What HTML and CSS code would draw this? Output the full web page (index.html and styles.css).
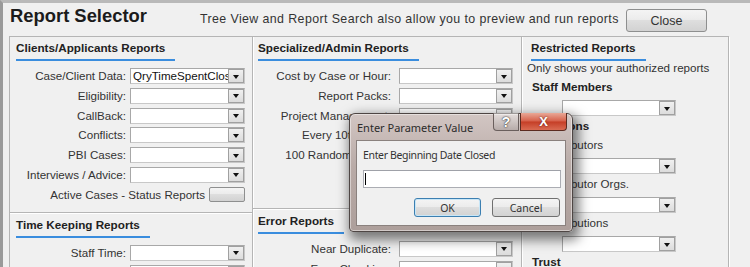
FILE: index.html
```html
<!DOCTYPE html>
<html lang="en">
  <head>
    <meta charset="UTF-8" />
    <meta name="viewport" content="width=device-width, initial-scale=1.0" />
    <title>Report Selector</title>
    <link rel="stylesheet" href="styles.css">
  </head>
  <body>
    <div class="window">
      <div class="topbar">
        <h1>Report Selector</h1>
        <p class="hint">Tree View and Report Search also allow you to preview and run reports</p>
        <button class="btn close-btn">Close</button>
      </div>

      <div class="panels">
        <div class="col col-clients">
          <section class="group group-main">
            <h2 class="group-title">Clients/Applicants Reports</h2>
            <div class="rows">
              <label>Case/Client Data:</label>
              <div class="combo"><span class="combo-text">QryTimeSpentClosed</span><span class="combo-btn"></span></div>
              <label>Eligibility:</label>
              <div class="combo"><span class="combo-text"></span><span class="combo-btn"></span></div>
              <label>CallBack:</label>
              <div class="combo"><span class="combo-text"></span><span class="combo-btn"></span></div>
              <label>Conflicts:</label>
              <div class="combo"><span class="combo-text"></span><span class="combo-btn"></span></div>
              <label>PBI Cases:</label>
              <div class="combo"><span class="combo-text"></span><span class="combo-btn"></span></div>
              <label>Interviews / Advice:</label>
              <div class="combo"><span class="combo-text"></span><span class="combo-btn"></span></div>
              <div class="row-wide">
                <span>Active Cases - Status Reports</span>
                <button class="btn small-btn"></button>
              </div>
            </div>
          </section>
          <section class="group">
            <h2 class="group-title">Time Keeping Reports</h2>
            <div class="rows">
              <label>Staff Time:</label>
              <div class="combo"><span class="combo-text"></span><span class="combo-btn"></span></div>
              <label>Staff Hours:</label>
              <div class="combo"><span class="combo-text"></span><span class="combo-btn"></span></div>
            </div>
          </section>
        </div>

        <div class="col col-admin">
          <section class="group group-main">
            <h2 class="group-title">Specialized/Admin Reports</h2>
            <div class="rows">
              <label>Cost by Case or Hour:</label>
              <div class="combo"><span class="combo-text"></span><span class="combo-btn"></span></div>
              <label>Report Packs:</label>
              <div class="combo"><span class="combo-text"></span><span class="combo-btn"></span></div>
              <label>Project Management:</label>
              <div class="combo"><span class="combo-text"></span><span class="combo-btn"></span></div>
              <label>Every 10th Case:</label>
              <div class="combo"><span class="combo-text"></span><span class="combo-btn"></span></div>
              <label>100 Random Cases:</label>
              <div class="combo"><span class="combo-text"></span><span class="combo-btn"></span></div>
            </div>
          </section>
          <section class="group">
            <h2 class="group-title">Error Reports</h2>
            <div class="rows">
              <label>Near Duplicate:</label>
              <div class="combo"><span class="combo-text"></span><span class="combo-btn"></span></div>
              <label>Error Checking:</label>
              <div class="combo"><span class="combo-text"></span><span class="combo-btn"></span></div>
            </div>
          </section>
        </div>

        <div class="col col-restricted">
          <h2 class="group-title restricted-title">Restricted Reports</h2>
          <p class="note">Only shows your authorized reports</p>
          <h3 class="r-head first">Staff Members</h3>
          <div class="combo r-combo"><span class="combo-text"></span><span class="combo-btn"></span></div>
          <h3 class="r-head">Donations</h3>
          <p class="r-label first">Contributors</p>
          <div class="combo r-combo"><span class="combo-text"></span><span class="combo-btn"></span></div>
          <p class="r-label">Contributor Orgs.</p>
          <div class="combo r-combo"><span class="combo-text"></span><span class="combo-btn"></span></div>
          <p class="r-label">Contributions</p>
          <div class="combo r-combo"><span class="combo-text"></span><span class="combo-btn"></span></div>
          <h3 class="r-head">Trust</h3>
        </div>
      </div>
    </div>

    <div class="dialog">
      <div class="dialog-caption">
        <span class="dialog-title">Enter Parameter Value</span>
        <span class="cap-btn cap-help">?</span>
        <span class="cap-btn cap-close">X</span>
      </div>
      <div class="dialog-body">
        <div class="prompt">Enter Beginning Date Closed</div>
        <div class="param-input"><span class="caret"></span></div>
        <div class="dialog-actions">
          <button class="btn dlg-btn ok">OK</button>
          <button class="btn dlg-btn">Cancel</button>
        </div>
      </div>
    </div>
  </body>
</html>
```

FILE: styles.css
```css
* {
  box-sizing: border-box;
}
html,
body {
  margin: 0;
  height: 100%;
  overflow: hidden;
}
body {
  background-color: #f0f0f0;
  font-family: "Liberation Sans", Arial, sans-serif;
  font-size: 11.6px;
  color: #333;
}
.window {
  height: 100%;
  border-top: 3px solid #b9b9b9;
  border-left: 3px solid #9a9a9a;
  display: flex;
  flex-direction: column;
}
.topbar {
  flex-shrink: 0;
  display: grid;
  grid-template-columns: 197px 1fr 81px;
  align-items: start;
  height: 33px;
  padding-right: 43px;
}
h1 {
  margin: 2px 0 0 7px;
  font-size: 18.4px;
  line-height: 22px;
  color: #1b1b1b;
}
.hint {
  margin: 9px 0 0;
  font-size: 12.4px;
  letter-spacing: 0.4px;
  line-height: 14px;
  white-space: nowrap;
}
.btn {
  font-family: "Liberation Sans", Arial, sans-serif;
  color: #333;
  padding: 0;
  border: 1px solid #8e8f8f;
  border-radius: 3px;
  background: linear-gradient(#f4f4f4 0%, #ececec 45%, #dedede 50%, #d2d2d2 100%);
}
.close-btn {
  margin-top: 6px;
  height: 23px;
  font-size: 12.5px;
}

.panels {
  align-self: flex-start;
  margin-left: 6px;
  display: grid;
  grid-template-columns: 243px 269px 207px;
  flex: 1;
  border-top: 1px solid #b5b5b5;
  border-left: 1px solid #b5b5b5;
}
.col {
  display: flex;
  flex-direction: column;
  border-right: 1px solid #b5b5b5;
  box-shadow: 1px 0 0 #fff;
}
.group {
  display: flex;
  flex-direction: column;
  align-items: flex-start;
  padding: 5px 0 0 6px;
}
.group-main {
  padding-top: 4px;
  padding-bottom: 9px;
  border-bottom: 1px solid #b5b5b5;
  box-shadow: 0 1px 0 #fff;
}
.col-admin .group {
  padding-left: 5px;
}
.col-admin .group-main {
  padding-bottom: 44.8px;
}
.group-title {
  margin: 0;
  padding: 0 10px 4px 0;
  border-bottom: 2px solid #3a8dde;
  font-size: 11.7px;
  line-height: 14px;
  color: #222;
}
.rows {
  display: grid;
  grid-template-columns: 110px 115px;
  grid-auto-rows: 16px;
  column-gap: 4px;
  row-gap: 3.8px;
  align-items: center;
  margin-top: 7px;
}
.col-admin .rows {
  grid-template-columns: 133px 114px;
  column-gap: 8px;
}
.rows label {
  text-align: right;
  white-space: nowrap;
  line-height: 16px;
}
.row-wide {
  grid-column: 1 / -1;
  display: flex;
  justify-content: flex-end;
  align-items: center;
  gap: 4px;
  white-space: nowrap;
}
.small-btn {
  width: 36px;
  height: 15px;
  border-radius: 2px;
}

.combo {
  display: flex;
  height: 16px;
  background: #fff;
  border: 1px solid #a8a8a8;
  border-right-color: #c8c8c8;
  border-bottom-color: #c8c8c8;
}
.combo-text {
  flex: 1;
  overflow: hidden;
  white-space: nowrap;
  padding-left: 2px;
  line-height: 14px;
  color: #111;
}
.combo-btn {
  width: 16px;
  display: flex;
  align-items: center;
  justify-content: center;
  border: 1px solid #a0a0a0;
  background: linear-gradient(#f0f0f0, #dcdcdc);
}
.combo-btn::after {
  content: "";
  margin-top: 1px;
  border-left: 3.5px solid transparent;
  border-right: 3.5px solid transparent;
  border-top: 4px solid #111;
}

.col-restricted {
  align-items: flex-start;
  padding: 4px 0 0 5px;
}
.restricted-title {
  margin-left: 4px;
}
.note {
  margin: 0;
  line-height: 14px;
}
.r-head {
  margin: 3px 0 0 5px;
  font-size: 11.7px;
  line-height: 14px;
  color: #222;
}
.r-head.first {
  margin-top: 5px;
}
.r-label {
  margin: 3px 0 0 13px;
  line-height: 14px;
}
.r-label.first {
  margin-top: 5px;
}
.r-combo {
  width: 114px;
  margin: 6px 0 0 35px;
}

.dialog {
  position: absolute;
  left: 349px;
  top: 113px;
  width: 224px;
  height: 119px;
  display: flex;
  flex-direction: column;
  padding: 0 6px 5px;
  border: 1px solid #4e4644;
  border-radius: 6px 6px 4px 4px;
  background: linear-gradient(#d2c6c3, #b9aba7 45%, #ad9f9b);
  box-shadow: inset 0 0 0 1px rgba(255, 255, 255, 0.45),
    3px 5px 12px 3px rgba(0, 0, 0, 0.5);
  font-family: "Noto Sans", "Open Sans", sans-serif;
}
.dialog-caption {
  display: flex;
  align-items: center;
  height: 26px;
}
.dialog-title {
  flex: 1;
  padding-left: 1px;
  font-size: 11px;
  color: #2b2b2b;
}
.cap-btn {
  align-self: flex-start;
  margin-top: -1px;
  height: 18px;
  display: flex;
  align-items: center;
  justify-content: center;
  color: #fff;
  font-family: "Liberation Sans", Arial, sans-serif;
  font-weight: bold;
  border: 1px solid #6a5f5d;
  border-top: none;
}
.cap-help {
  width: 26px;
  margin-right: 1px;
  font-size: 14px;
  border-radius: 0 0 0 4px;
  background: linear-gradient(rgba(255, 255, 255, 0.45), rgba(170, 160, 158, 0.6));
  text-shadow: 0 0 2px #333, 0 0 1px #333;
}
.cap-close {
  width: 47px;
  margin-right: -1px;
  font-size: 13px;
  border-color: #5b2b20;
  border-radius: 0 0 4px 0;
  background: linear-gradient(#e9a896, #d6604a 48%, #c53e26 52%, #d96b52);
  text-shadow: 0 0 2px #5a1a10;
}
.dialog-body {
  flex: 1;
  padding: 7px 4px 0 6px;
  background: #f0f0f0;
  border: 1px solid #8a817e;
}
.prompt {
  font-size: 10.5px;
  letter-spacing: -0.35px;
  line-height: 14px;
  color: #333;
}
.param-input {
  margin-top: 8px;
  height: 18px;
  background: #fff;
  border: 1px solid #abadb3;
  border-top-color: #9fa1a8;
  display: flex;
  align-items: center;
}
.caret {
  width: 1px;
  height: 12px;
  margin-left: 1px;
  background: #000;
}
.dialog-actions {
  display: flex;
  justify-content: flex-end;
  gap: 11px;
  margin-top: 10px;
  padding-right: 1px;
}
.dlg-btn {
  width: 68px;
  height: 19px;
  font-family: "Noto Sans", "Open Sans", sans-serif;
  font-size: 10.5px;
  border-color: #707070;
}
.dlg-btn.ok {
  width: 67px;
  border-color: #3c7fb1;
  box-shadow: inset 0 0 0 1px #c8e6f7;
}
```
